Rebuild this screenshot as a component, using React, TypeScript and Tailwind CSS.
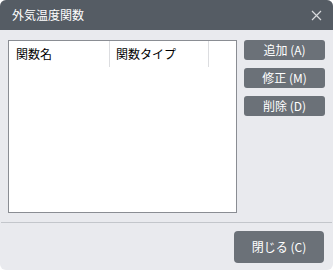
import React from "react";

const font = { fontFamily: '"Noto Sans CJK JP", "Noto Sans", sans-serif' };

export default function App() {
  return (
    <div className="w-[333px] h-[270px] bg-white" style={font}>
      <div className="w-[333px] h-[270px] rounded-[6px] overflow-hidden bg-[#e9eaee] flex flex-col">
        <div className="h-[30px] bg-[#555c64] flex items-center justify-between pl-[12px] pr-[11px]">
          <span className="text-white text-[12px] leading-none">外気温度関数</span>
          <svg width="11" height="11" viewBox="0 0 11 11" className="text-[#d8dadd]">
            <path d="M1 1 L10 10 M10 1 L1 10" stroke="currentColor" strokeWidth="1.2" fill="none" />
          </svg>
        </div>
        <div className="flex pl-[8px] pr-[8px] pt-[10px] gap-[7px]">
          <div className="w-[229px] h-[173px] bg-white border border-[#8a8d93]">
            <div className="flex h-[26px] items-center text-[12px] text-black leading-none">
              <div className="w-[101px] h-full flex items-center pl-[7px] border-r border-[#dcdde0]">関数名</div>
              <div className="w-[99px] h-full flex items-center pl-[6px] border-r border-[#dcdde0]">関数タイプ</div>
            </div>
          </div>
          <div className="flex flex-col gap-[8px]">
            {["追加 (A)", "修正 (M)", "削除 (D)"].map((t) => (
              <button key={t} className="w-[81px] h-[20px] rounded-[3px] bg-[#6b7178] text-white text-[12px] leading-none flex items-center justify-center">
                {t}
              </button>
            ))}
          </div>
        </div>
        <div className="mt-[9px] mx-[1px] h-px bg-[#c3c6cb]" />
        <div className="flex justify-end pr-[9px] pt-[8px]">
          <button className="w-[90px] h-[32px] rounded-[4px] bg-[#6b7178] text-white text-[12px] leading-none flex items-center justify-center">
            閉じる (C)
          </button>
        </div>
      </div>
    </div>
  );
}
